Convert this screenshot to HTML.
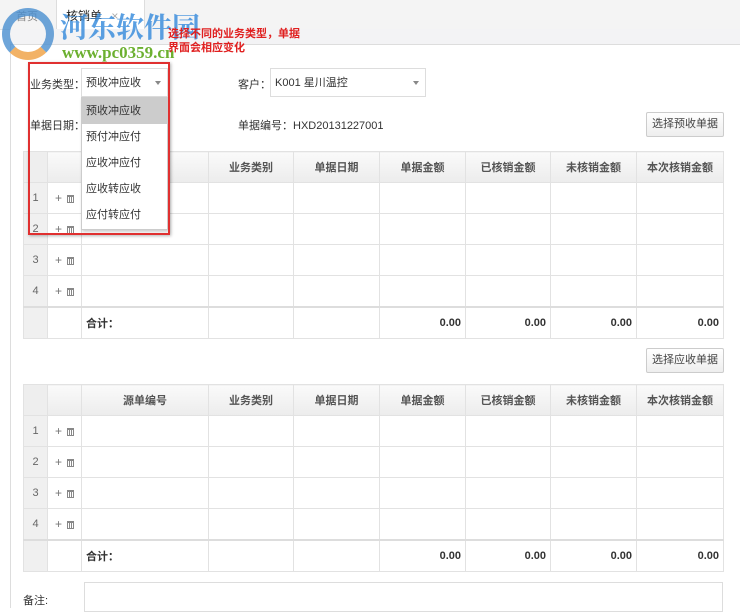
<!DOCTYPE html>
<html><head><meta charset="utf-8"><style>
*{box-sizing:border-box;margin:0;padding:0}
body{width:740px;height:608px;overflow:hidden;background:#fff;font-family:"Liberation Sans","Noto Sans CJK SC",sans-serif;font-size:11px;color:#333;position:relative}
.a{position:absolute}
table{border-collapse:collapse;table-layout:fixed;position:absolute;left:23px;width:700px}
td{border:1px solid #e2e2e2;height:31px;padding:0 4px;white-space:nowrap}
tr.h td{background:linear-gradient(#fafafa,#ececec);text-align:center;font-weight:bold;color:#555}
td.n{background:#f0f0f0;color:#666;text-align:center;font-size:11px}
td.o{color:#777;font-size:12px;padding-left:7px}
.tr{display:inline-block;width:7px;height:8px;border:1px solid #888;border-top:2px solid #888;margin-left:5px;vertical-align:-1px;background:repeating-linear-gradient(90deg,#fff 0 1px,#888 1px 2px)}
tr.t td{height:32px;font-weight:bold;text-align:right;border-top:2px solid #ddd}
tr.t td.n{background:#f0f0f0}
.btn{border:1px solid #ccc;border-radius:2px;background:linear-gradient(#fff,#eee);height:25px;width:78px;text-align:center;line-height:23px;color:#444}
.sel{border:1px solid #ddd;height:29px;line-height:29px;padding-left:4px;background:#fff}
.arr{position:absolute;right:6px;top:12px;border:3px solid transparent;border-top:4px solid #888}
</style></head><body>
<div class="a" style="left:0;top:0;width:740px;height:30px;background:#f4f4f4;border-bottom:1px solid #ddd"></div>
<div class="a" style="left:0;top:0;width:57px;height:30px;border-right:1px solid #ddd;color:#888;padding:8px 0 0 16px">首页</div>
<div class="a" style="left:57px;top:0;width:88px;height:31px;background:#fff;border-right:1px solid #ddd;padding:7px 0 0 9px;font-size:12px;color:#222">核销单 <span style="color:#aaa;margin-left:6px">×</span></div>
<div class="a" style="left:10px;top:29px;width:730px;height:16px;background:#f3f3f5;border-bottom:1px solid #ddd"></div>
<div class="a" style="left:10px;top:45px;width:1px;height:563px;background:#ddd"></div>
<!-- watermark -->
<div class="a" style="left:2px;top:8px;width:52px;height:52px;border-radius:50%;border:8px solid #4a8fd0;border-bottom-color:#f0a040;opacity:.8"></div>
<div class="a" style="left:60px;top:6px;font-size:28px;font-weight:bold;color:#3d8fdd;opacity:.85;font-family:'Noto Serif CJK SC',serif">河东软件园</div>
<div class="a" style="left:62px;top:43px;font-size:17px;font-weight:bold;color:#6cb030;font-family:'Liberation Serif',serif">www.pc0359.cn</div>
<div class="a" style="left:168px;top:27px;font-size:11px;font-weight:bold;color:#e02020;line-height:14px">选择不同的业务类型，单据<br>界面会相应变化</div>
<div class="a" style="left:30px;top:76px">业务类型：</div>
<div class="a sel" style="left:81px;top:68px;width:87px">预收冲应收<span class="arr"></span></div>
<div class="a" style="left:238px;top:76px">客户：</div>
<div class="a sel" style="left:270px;top:68px;width:156px">K001 星川温控<span class="arr"></span></div>
<div class="a" style="left:30px;top:117px">单据日期：</div>
<div class="a" style="left:238px;top:117px">单据编号：HXD20131227001</div>
<div class="a btn" style="left:646px;top:112px">选择预收单据</div>
<table style="top:151px">
<colgroup><col style="width:24px"><col style="width:34px"><col style="width:127px"><col style="width:85px"><col style="width:86px"><col style="width:86px"><col style="width:85px"><col style="width:86px"><col style="width:87px"></colgroup>
<tr class="h"><td class="n" style="background:#eee"></td><td></td><td>源单编号</td><td>业务类别</td><td>单据日期</td><td>单据金额</td><td>已核销金额</td><td>未核销金额</td><td>本次核销金额</td></tr>
<tr><td class="n">1</td><td class="o">+<span class="tr"></span></td><td></td><td></td><td></td><td></td><td></td><td></td><td></td></tr>
<tr><td class="n">2</td><td class="o">+<span class="tr"></span></td><td></td><td></td><td></td><td></td><td></td><td></td><td></td></tr>
<tr><td class="n">3</td><td class="o">+<span class="tr"></span></td><td></td><td></td><td></td><td></td><td></td><td></td><td></td></tr>
<tr><td class="n">4</td><td class="o">+<span class="tr"></span></td><td></td><td></td><td></td><td></td><td></td><td></td><td></td></tr>
<tr class="t"><td class="n"></td><td></td><td style="text-align:left">合计：</td><td></td><td></td><td>0.00</td><td>0.00</td><td>0.00</td><td>0.00</td></tr>
</table>
<div class="a btn" style="left:646px;top:348px">选择应收单据</div>
<table style="top:384px">
<colgroup><col style="width:24px"><col style="width:34px"><col style="width:127px"><col style="width:85px"><col style="width:86px"><col style="width:86px"><col style="width:85px"><col style="width:86px"><col style="width:87px"></colgroup>
<tr class="h"><td class="n" style="background:#eee"></td><td></td><td>源单编号</td><td>业务类别</td><td>单据日期</td><td>单据金额</td><td>已核销金额</td><td>未核销金额</td><td>本次核销金额</td></tr>
<tr><td class="n">1</td><td class="o">+<span class="tr"></span></td><td></td><td></td><td></td><td></td><td></td><td></td><td></td></tr>
<tr><td class="n">2</td><td class="o">+<span class="tr"></span></td><td></td><td></td><td></td><td></td><td></td><td></td><td></td></tr>
<tr><td class="n">3</td><td class="o">+<span class="tr"></span></td><td></td><td></td><td></td><td></td><td></td><td></td><td></td></tr>
<tr><td class="n">4</td><td class="o">+<span class="tr"></span></td><td></td><td></td><td></td><td></td><td></td><td></td><td></td></tr>
<tr class="t"><td class="n"></td><td></td><td style="text-align:left">合计：</td><td></td><td></td><td>0.00</td><td>0.00</td><td>0.00</td><td>0.00</td></tr>
</table>
<div class="a" style="left:23px;top:592px">备注:</div>
<div class="a" style="left:84px;top:582px;width:639px;height:30px;border:1px solid #ddd"></div>
<!-- dropdown -->
<div class="a" style="left:81px;top:97px;width:87px;height:133px;background:#fff;border:1px solid #ccc;box-shadow:1px 2px 3px rgba(0,0,0,.2)">
<div style="height:26px;line-height:26px;padding-left:4px;background:#ccc">预收冲应收</div>
<div style="height:26px;line-height:26px;padding-left:4px">预付冲应付</div>
<div style="height:26px;line-height:26px;padding-left:4px">应收冲应付</div>
<div style="height:26px;line-height:26px;padding-left:4px">应收转应收</div>
<div style="height:26px;line-height:26px;padding-left:4px">应付转应付</div>
</div>
<div class="a" style="left:28px;top:62px;width:142px;height:173px;border:2px solid #e03030;box-shadow:1px 1px 3px rgba(0,0,0,.3)"></div>
</body></html>
